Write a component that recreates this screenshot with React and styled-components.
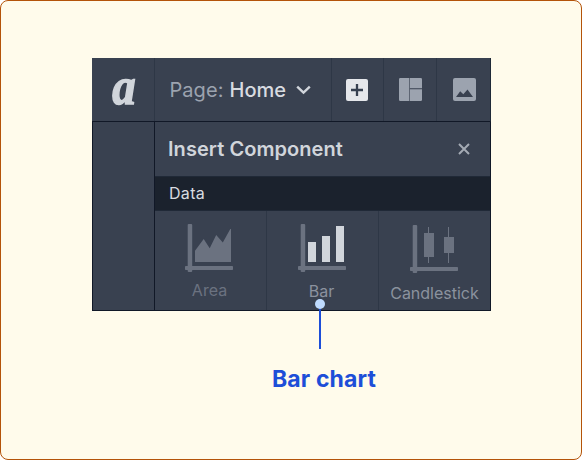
import React from 'react';
import styled, { createGlobalStyle } from 'styled-components';

const Global = createGlobalStyle`
  * { box-sizing: border-box; }
  body { margin: 0; background: #fff; font-family: Inter, "Liberation Sans", sans-serif; }
  svg { display: block; flex: none; }
`;

const Card = styled.main`
  width: 582px;
  height: 460px;
  padding: 57px 0 0 91px;
  border: 1px solid #b45309;
  border-radius: 8px;
  background: #fffbeb;
`;

const Editor = styled.section`
  position: relative;
  width: 399px;
  height: 253px;
  background: #394150;
`;

const TopBar = styled.header`
  display: flex;
  height: 64px;
  border-bottom: 1px solid #111827;
  border-right: 1px solid #1f2937;
`;

const BarCell = styled.div`
  display: flex;
  flex: none;
  align-items: center;
  justify-content: center;
  width: ${(p) => p.$width}px;
  padding-left: ${(p) => p.$inset || 0}px;
  padding-right: ${(p) => p.$nudge || 0}px;
  border-right: ${(p) => (p.$last ? 'none' : '1px solid #2e3746')};
`;

const Logo = styled.span`
  font: italic 700 52px/64px "Liberation Serif", serif;
  color: #d1d5db;
  -webkit-text-stroke: 1.5px #d1d5db;
  height: 64px;
  margin: -6px 0 0 2px;
  transform: scaleX(0.9);
`;

const PagePicker = styled(BarCell)`
  justify-content: flex-start;
  padding: 0 0 0 14.5px;
  font-size: 20px;
  line-height: 24px;
  letter-spacing: 0.05px;
  color: #9ca3af;
  white-space: pre;
`;

const PageName = styled.span`
  margin: 0 10px 0 6px;
  font-weight: 500;
  color: #d8dbe0;
`;

const Body = styled.div`
  display: flex;
  height: 189px;
  border: 1px solid #111827;
  border-top: 0;
`;

const Rail = styled.div`
  width: 62px;
  border-right: 1px solid #111827;
`;

const Panel = styled.div`
  flex: 1;
`;

const PanelHeader = styled.div`
  display: flex;
  align-items: center;
  justify-content: space-between;
  height: 54px;
  padding: 0 20px 0 13px;
`;

const Title = styled.h1`
  margin: 0;
  font-size: 20px;
  line-height: 24px;
  letter-spacing: 0.06px;
  font-weight: 600;
  color: #d1d5db;
`;

const Group = styled.div`
  height: 35px;
  padding-left: 14px;
  font-size: 16px;
  line-height: 33px;
  letter-spacing: 0.3px;
  color: #d8dbe0;
  background: #1b222d;
  border-top: 1px solid #202937;
  border-bottom: 1px solid #202937;
`;

const Tiles = styled.div`
  display: grid;
  grid-template-columns: 112px 112px 111px;
  height: 99px;
`;

const Tile = styled.div`
  display: flex;
  flex-direction: column;
  padding: ${(p) => p.$top}px 0 0;
  border-right: ${(p) => (p.$last ? 'none' : '1px solid #2e3746')};
  color: #6b7280;

  svg { margin-left: ${(p) => p.$left}px; }
`;

const TileLabel = styled.span`
  margin-top: ${(p) => p.$gap}px;
  padding-right: ${(p) => p.$shift || 0}px;
  font-size: 16px;
  line-height: 20px;
  text-align: center;
  color: ${(p) => p.$color};
`;

const Callout = styled.div`
  position: absolute;
  left: 178px;
  top: 241px;
  width: 100px;
  display: flex;
  flex-direction: column;
  align-items: center;
`;

const Dot = styled.i`
  width: 10px;
  height: 10px;
  border-radius: 50%;
  background: #bfdbfe;
`;

const Leader = styled.i`
  width: 2px;
  height: 40px;
  background: #1d4ed8;
`;

const CalloutText = styled.strong`
  margin: 16px 0 0 8px;
  font-size: 23px;
  line-height: 28px;
  font-weight: 700;
  letter-spacing: 0.15px;
  white-space: nowrap;
  color: #1d4ed8;
`;

const Axes = ({ children }) => (
  <svg width="48" height="48" viewBox="0 0 48 48">
    <rect x="2.7" width="4.5" height="48" rx="1" fill="#6b7280" />
    <rect y="42" width="48" height="4" rx="0.7" fill="#6b7280" />
    {children}
  </svg>
);

const Chevron = () => (
  <svg width="15" height="10" viewBox="0 0 15 10" fill="none" stroke="#d1d5db" strokeWidth="2.4">
    <path d="M1.2 1.6 7.5 7.7l6.3-6.1" />
  </svg>
);

const PlusIcon = () => (
  <svg width="22" height="22" viewBox="0 0 22 22">
    <rect width="22" height="22" rx="2" fill="#e5e7eb" />
    <path d="M11 5v12M5 11h12" stroke="#374151" strokeWidth="2.3" />
  </svg>
);

const LayoutIcon = () => (
  <svg width="23" height="23" viewBox="0 0 23 23" fill="#9ca3af">
    <path d="M1.2 0h9.1v23H1.2A1.2 1.2 0 0 1 0 21.8V1.2A1.2 1.2 0 0 1 1.2 0Z" />
    <path d="M10.9 0h10.9A1.2 1.2 0 0 1 23 1.2v9.1H10.9Z" />
    <path d="M10.9 11.2H23v10.6a1.2 1.2 0 0 1-1.2 1.2H10.9Z" />
  </svg>
);

const ImageIcon = () => (
  <svg width="23" height="23" viewBox="0 0 23 23">
    <rect width="23" height="23" rx="2" fill="#9ca3af" />
    <path d="M3 19 7.2 13.2l3.1 3 4.2-4.7 5.5 7.5Z" fill="#394150" />
  </svg>
);

const CloseIcon = () => (
  <svg width="12" height="12" viewBox="0 0 12 12" stroke="#a4aab4" strokeWidth="2">
    <path d="M1 1l10 10M11 1 1 11" />
  </svg>
);

export default function App() {
  return (
    <>
      <Global />
      <Card>
        <Editor>
          <TopBar>
            <BarCell $width={63}><Logo>a</Logo></BarCell>
            <PagePicker $width={177}>
              Page:<PageName>Home</PageName><Chevron />
            </PagePicker>
            <BarCell $width={52} $nudge={1}><PlusIcon /></BarCell>
            <BarCell $width={53}><LayoutIcon /></BarCell>
            <BarCell $width={53} $inset={2} $last><ImageIcon /></BarCell>
          </TopBar>
          <Body>
            <Rail />
            <Panel>
              <PanelHeader>
                <Title>Insert Component</Title>
                <CloseIcon />
              </PanelHeader>
              <Group>Data</Group>
              <Tiles>
                <Tile $top={13} $left={30}>
                  <Axes>
                    <path d="M10 26.8 18.7 15l6 9.3L31.2 11l6.6 7.6L45.3 5H46v33H10Z" fill="#6b7280" />
                  </Axes>
                  <TileLabel $gap={8} $shift={2} $color="#6b7280">Area</TileLabel>
                </Tile>
                <Tile $top={13} $left={31}>
                  <Axes>
                    <path d="M10 18h8v20h-8ZM24 12h8v26h-8ZM38 2h8v36h-8Z" fill="#d1d5db" />
                  </Axes>
                  <TileLabel $gap={9} $shift={2} $color="#8b929e">Bar</TileLabel>
                </Tile>
                <Tile $top={14} $left={31} $last>
                  <Axes>
                    <path d="M14 8h10v24H14ZM34 12h10v16H34ZM18 2h1v36h-1ZM38 2h1v36h-1Z" fill="#6b7280" />
                  </Axes>
                  <TileLabel $gap={10} $color="#8b929e">Candlestick</TileLabel>
                </Tile>
              </Tiles>
            </Panel>
          </Body>
          <Callout>
            <Dot />
            <Leader />
            <CalloutText>Bar chart</CalloutText>
          </Callout>
        </Editor>
      </Card>
    </>
  );
}
